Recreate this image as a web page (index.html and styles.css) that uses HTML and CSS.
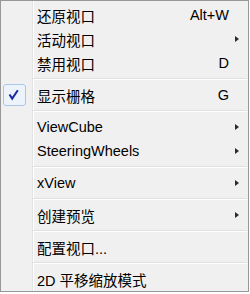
FILE: index.html
```html
<!DOCTYPE html>
<html>
  <head>
    <title>视口菜单</title>
    <meta name="viewport" content="width=device-width, initial-scale=1.0" />
    <link rel="stylesheet" href="styles.css">
  </head>
  <body>
    <ul class="menu">
      <li class="item"><span class="icon"></span><span class="label">还原视口</span><span class="key">Alt+W</span><span class="sub"></span></li>
      <li class="item"><span class="icon"></span><span class="label">活动视口</span><span class="key"></span><span class="sub"><i class="arrow"></i></span></li>
      <li class="item"><span class="icon"></span><span class="label">禁用视口</span><span class="key">D</span><span class="sub"></span></li>
      <li class="sep"></li>
      <li class="item">
        <span class="icon"><span class="check">
          <svg width="12" height="12" viewBox="0 0 12 12"><path d="M1.5 5.5 L4.2 9.6 L9.8 1.2" fill="none" stroke="#1b2a9e" stroke-width="2"/></svg>
        </span></span>
        <span class="label">显示栅格</span><span class="key">G</span><span class="sub"></span>
      </li>
      <li class="sep"></li>
      <li class="item"><span class="icon"></span><span class="label">ViewCube</span><span class="key"></span><span class="sub"><i class="arrow"></i></span></li>
      <li class="item"><span class="icon"></span><span class="label">SteeringWheels</span><span class="key"></span><span class="sub"><i class="arrow"></i></span></li>
      <li class="sep"></li>
      <li class="item"><span class="icon"></span><span class="label">xView</span><span class="key"></span><span class="sub"><i class="arrow"></i></span></li>
      <li class="sep"></li>
      <li class="item"><span class="icon"></span><span class="label">创建预览</span><span class="key"></span><span class="sub"><i class="arrow"></i></span></li>
      <li class="sep"></li>
      <li class="item"><span class="icon"></span><span class="label">配置视口...</span><span class="key"></span><span class="sub"></span></li>
      <li class="sep"></li>
      <li class="item"><span class="icon"></span><span class="label">2D 平移缩放模式</span><span class="key"></span><span class="sub"></span></li>
    </ul>
  </body>
</html>
```

FILE: styles.css
```css
body {
  margin: 0;
  background: #fff;
  font-family: "Liberation Sans", "Noto Sans CJK SC", sans-serif;
  font-size: 14.5px;
  color: #000;
}
.menu {
  list-style: none;
  margin: 0;
  padding: 2px 0 0 0;
  width: 249px;
  height: 292px;
  box-sizing: border-box;
  border: 1px solid #979797;
  background-color: #f0f0f0;
  background-image: linear-gradient(to right, transparent 31px, #e2e3e3 31px, #e2e3e3 32px, #fff 32px, #fff 33px, transparent 33px);
}
.item {
  display: grid;
  grid-template-columns: 36px 1fr auto 19px;
  align-items: center;
  height: 24px;
  white-space: nowrap;
}
.icon {
  display: flex;
  align-items: center;
  height: 100%;
}
.check {
  display: flex;
  align-items: center;
  justify-content: center;
  margin-left: 2px;
  width: 23px;
  height: 22px;
  box-sizing: border-box;
  border: 1px solid #a9c7ec;
  border-radius: 3px;
  background: #edf3fb;
}
.check svg {
  margin-left: -1px;
}
.key {
  text-align: right;
}
.sub {
  display: flex;
  align-items: center;
}
.arrow {
  display: block;
  margin-left: 6px;
  width: 0;
  height: 0;
  border-top: 3.5px solid transparent;
  border-bottom: 3.5px solid transparent;
  border-left: 4px solid #2b2b2b;
}
.sep {
  height: 8px;
  margin: 0 1px 0 32px;
  background: linear-gradient(to bottom, transparent 3px, #e0e0e0 3px, #e0e0e0 4px, #fff 4px, #fff 5px, transparent 5px);
}
```
